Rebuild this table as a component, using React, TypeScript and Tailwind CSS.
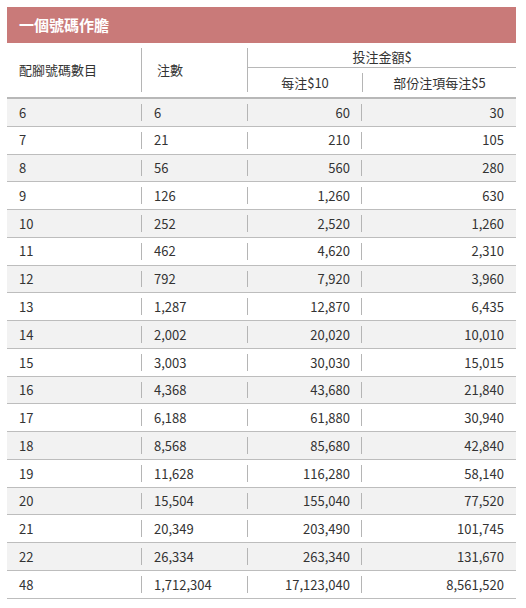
import React from "react";

const rows: [string, string, string, string][] = [
  ["6", "6", "60", "30"],
  ["7", "21", "210", "105"],
  ["8", "56", "560", "280"],
  ["9", "126", "1,260", "630"],
  ["10", "252", "2,520", "1,260"],
  ["11", "462", "4,620", "2,310"],
  ["12", "792", "7,920", "3,960"],
  ["13", "1,287", "12,870", "6,435"],
  ["14", "2,002", "20,020", "10,010"],
  ["15", "3,003", "30,030", "15,015"],
  ["16", "4,368", "43,680", "21,840"],
  ["17", "6,188", "61,880", "30,940"],
  ["18", "8,568", "85,680", "42,840"],
  ["19", "11,628", "116,280", "58,140"],
  ["20", "15,504", "155,040", "77,520"],
  ["21", "20,349", "203,490", "101,745"],
  ["22", "26,334", "263,340", "131,670"],
  ["48", "1,712,304", "17,123,040", "8,561,520"],
];

export default function App() {
  return (
    <div
      className="ml-[7px] pt-[7px] w-[509px] text-[13px] text-[#333333]"
      style={{ fontFamily: '"Noto Sans CJK TC", "Noto Sans", sans-serif' }}
    >
      <div className="h-[36px] bg-[#c97a79] flex items-center pl-[12px] text-white font-bold text-[15px]">
        一個號碼作膽
      </div>
      <div className="flex h-[56px] border-b-2 border-[#b8b8b8]">
        <div className="w-[134px] flex items-center pl-[12px]">配腳號碼數目</div>
        <div className="w-[106px] py-[5px]">
          <div className="h-full border-l border-[#b5b5b5] flex items-center pl-[15px]">注數</div>
        </div>
        <div className="flex-1 py-[5px] flex">
          <div className="border-l border-[#b5b5b5] h-full" />
          <div className="flex-1 flex flex-col -my-[5px]">
            <div className="h-[27px] border-b border-[#b8b8b8] flex items-center justify-center pt-[4px]">
              投注金額$
            </div>
            <div className="flex-1 flex">
              <div className="w-[114px] flex items-center justify-center">每注$10</div>
              <div className="flex-1 py-[5px]">
                <div className="h-full border-l border-[#b5b5b5] flex items-center justify-center">
                  部份注項每注$5
                </div>
              </div>
            </div>
          </div>
        </div>
      </div>
      {rows.map((r, i) => (
        <div
          key={i}
          className={`flex h-[27.78px] border-b border-[#bdbdbd] ${i % 2 === 0 ? "bg-[#f2f2f2]" : "bg-white"}`}
        >
          <div className="w-[134px] flex items-center pl-[12px]">{r[0]}</div>
          <div className="w-[106px] py-[5px]">
            <div className="h-full border-l border-[#b5b5b5] flex items-center pl-[12px]">{r[1]}</div>
          </div>
          <div className="w-[114px] py-[5px]">
            <div className="h-full border-l border-[#b5b5b5] flex items-center justify-end pr-[11px]">{r[2]}</div>
          </div>
          <div className="flex-1 py-[5px]">
            <div className="h-full border-l border-[#b5b5b5] flex items-center justify-end pr-[12px]">{r[3]}</div>
          </div>
        </div>
      ))}
    </div>
  );
}
